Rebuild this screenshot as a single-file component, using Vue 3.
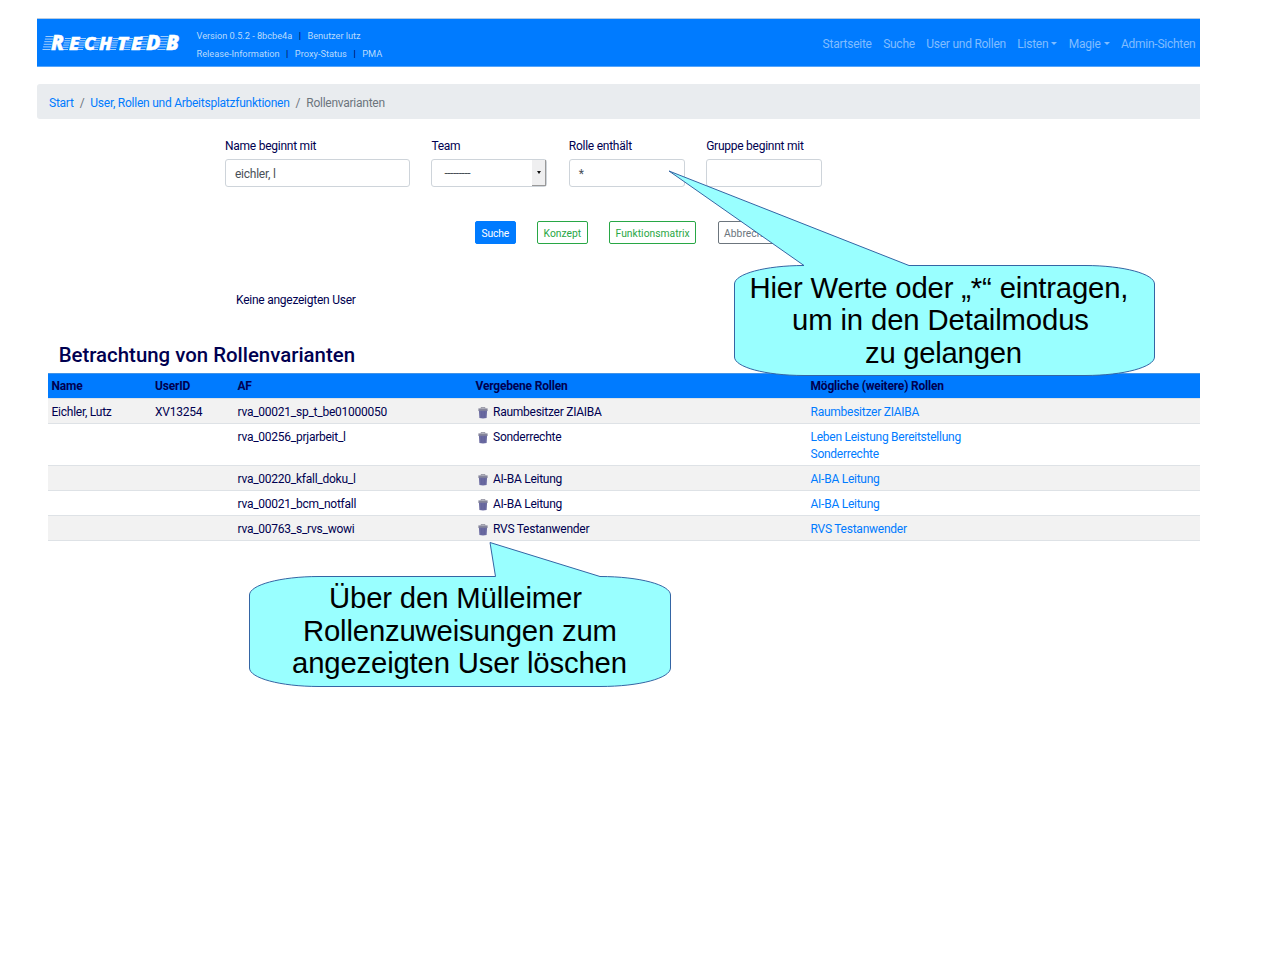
<script setup>
const nav = [
  { label: 'Startseite' },
  { label: 'Suche' },
  { label: 'User und Rollen' },
  { label: 'Listen', menu: true },
  { label: 'Magie', menu: true },
  { label: 'Admin-Sichten' },
]
const rows = [
  { name: 'Eichler, Lutz', id: 'XV13254', af: 'rva_00021_sp_t_be01000050', role: 'Raumbesitzer ZIAIBA', more: ['Raumbesitzer ZIAIBA'] },
  { af: 'rva_00256_prjarbeit_l', role: 'Sonderrechte', more: ['Leben Leistung Bereitstellung', 'Sonderrechte'] },
  { af: 'rva_00220_kfall_doku_l', role: 'AI-BA Leitung', more: ['AI-BA Leitung'] },
  { af: 'rva_00021_bcm_notfall', role: 'AI-BA Leitung', more: ['AI-BA Leitung'] },
  { af: 'rva_00763_s_rvs_wowi', role: 'RVS Testanwender', more: ['RVS Testanwender'] },
]
const glyphs = [
  { c: 'R', x: 14, w: 13, big: true },
  { c: 'E', x: 32, w: 10.5 },
  { c: 'C', x: 47, w: 11.5 },
  { c: 'H', x: 62, w: 13 },
  { c: 'T', x: 80, w: 11 },
  { c: 'E', x: 94, w: 11 },
  { c: 'D', x: 109, w: 14.5, big: true },
  { c: 'B', x: 129, w: 13, big: true },
]
const streaks = [0, 1, 2, 3, 4, 5]
</script>

<template>
  <div class="page">
    <header class="bar">
      <svg class="logo" width="146" height="32" viewBox="0 -4 146 32">
        <g v-for="(g, i) in glyphs" :key="i">
          <path
            v-for="s in streaks"
            :key="s"
            :d="`M${g.x - (g.big ? 5.5 : 4) - s * 0.6} ${(g.big ? 5.5 : 7.5) + s * (g.big ? 2.6 : 2.2)}h${g.big ? 8 : 6}`"
            class="streak"
          />
          <text :x="g.x" y="19" :font-size="g.big ? 20.5 : 17.5" :textLength="g.w" lengthAdjust="spacingAndGlyphs" class="glyph">{{ g.c }}</text>
        </g>
      </svg>
      <div class="meta">
        <div><span>Version 0.5.2 - 8bcbe4a</span><i>|</i><span>Benutzer lutz</span></div>
        <div><span>Release-Information</span><i>|</i><span>Proxy-Status</span><i>|</i><span>PMA</span></div>
      </div>
      <nav>
        <a v-for="n in nav" :key="n.label">{{ n.label }}<b v-if="n.menu" class="caret"></b></a>
      </nav>
    </header>

    <div class="crumbs"><a>Start</a><span>/</span><a>User, Rollen und Arbeitsplatzfunktionen</a><span>/</span><em>Rollenvarianten</em></div>

    <form class="filters" @submit.prevent>
      <div><label>Name beginnt mit</label><div class="field">eichler, l</div></div>
      <div><label>Team</label><div class="field select"><span>---------</span><div class="drop"><b class="caret dark"></b></div></div></div>
      <div><label>Rolle enthält</label><div class="field">*</div></div>
      <div><label>Gruppe beginnt mit</label><div class="field"></div></div>
    </form>

    <div class="buttons">
      <button class="primary">Suche</button>
      <button class="green">Konzept</button>
      <button class="green">Funktionsmatrix</button>
      <button class="grey">Abbrechen</button>
    </div>

    <p class="none">Keine angezeigten User</p>
    <h1>Betrachtung von Rollenvarianten</h1>

    <div class="table">
      <div class="row head"><div>Name</div><div>UserID</div><div>AF</div><div>Vergebene Rollen</div><div>Mögliche (weitere) Rollen</div></div>
      <div v-for="r in rows" :key="r.af" class="row">
        <div>{{ r.name }}</div>
        <div>{{ r.id }}</div>
        <div>{{ r.af }}</div>
        <div class="role">
          <svg width="10" height="12" viewBox="0 0 10 12">
            <path d="M3 1.4V.6h4v.8" fill="none" stroke="#8c8c9c" stroke-width=".9" />
            <path d="M.4 1.4h9.200v2.600H.4z" fill="#85859a" />
            <path d="M.9 3.700h8.200l-.5 7.300q-3.600.9-7.200 0z" fill="#6c6ca2" />
            <path d="M3.400 4.500v6M5 4.500v6M6.600 4.500v6" stroke="#5d5d96" stroke-width=".5" />
          </svg>
          {{ r.role }}
        </div>
        <div><a v-for="m in r.more" :key="m">{{ m }}</a></div>
      </div>
    </div>

    <svg class="callouts" width="1280" height="960" viewBox="0 0 1280 960">
      <path class="bubble" d="M804 265.5L669 171L909 265.5H1085C1124 265.5 1154.500 274 1154.500 284V357C1154.500 367 1124 375.500 1085 375.500H804C765 375.500 734.500 367 734.500 357V284C734.500 274 765 265.500 804 265.500Z" />
      <text x="749.500" y="298" textLength="379">Hier Werte oder „*“ eintragen,</text>
      <text x="792" y="330" textLength="297">um in den Detailmodus</text>
      <text x="865" y="363" textLength="157">zu gelangen</text>
      <path class="bubble" d="M495.500 576.500L490 542.500L600 576.500C640 576.500 670.500 585 670.500 595V668C670.500 678 640 686.500 600 686.500H319C280 686.500 249.500 678 249.500 668V595C249.500 585 280 576.500 319 576.500Z" />
      <text x="329" y="608" textLength="253">Über den Mülleimer</text>
      <text x="303" y="641" textLength="314">Rollenzuweisungen zum</text>
      <text x="292" y="673" textLength="335">angezeigten User löschen</text>
    </svg>
  </div>
</template>

<style>
body { margin: 0; background: #fff; }
</style>

<style scoped>
.page {
  position: relative;
  box-sizing: border-box;
  width: 1280px;
  height: 960px;
  padding: 18px 80px 0 37px;
  overflow: hidden;
  font: 12px/17.3px Roboto, sans-serif;
  letter-spacing: -.25px;
  color: #000050;
}
a { color: #007bff; }
.bar {
  display: flex;
  align-items: center;
  box-sizing: border-box;
  height: 49px;
  border-top: 1px solid #b8cbe0;
  border-bottom: 1px solid #55a5fb;
  background: #007bff;
}
.logo { width: 146px; height: 32px; margin: 0 13.500px 0 0; overflow: visible; }
.streak { fill: none; stroke: #fff; stroke-width: .9; opacity: .7; }
.glyph { font-family: "Open Sans", sans-serif; font-weight: 800; font-style: italic; letter-spacing: 0; fill: #fff; stroke: #fff; stroke-width: .4; }
.meta { font-size: 9.25px; letter-spacing: 0; line-height: 18px; color: #b8dafd; white-space: nowrap; padding-top: 4px; }
.meta i { font-style: normal; color: #000050; margin: 0 6.500px; }
.meta div:first-child { letter-spacing: -.04px; }
nav { display: flex; gap: 11.400px; margin-left: auto; padding: 4px 4.500px 0 0; }
nav a { color: #80bdff; white-space: nowrap; }
.caret {
  display: inline-block;
  margin-left: 3px;
  vertical-align: 3px;
  border: 3px solid transparent;
  border-top-color: #80bdff;
  border-bottom: 0;
}
.crumbs {
  display: flex;
  box-sizing: border-box;
  height: 35px;
  margin-top: 17px;
  padding: 10.500px 12px 0;
  background: #e9ecef;
  border-radius: 3px 0 0 3px;
}
.crumbs span { color: #6c757d; padding: 0 6px; }
.crumbs em { color: #6c757d; font-style: normal; }
.filters {
  display: grid;
  grid-template-columns: 185px 116px 116px 116px;
  column-gap: 21.400px;
  margin: 19px 0 0 188px;
}
.filters label { display: block; height: 21px; }
.field {
  display: flex;
  align-items: center;
  box-sizing: border-box;
  height: 28px;
  padding: 3px 9px 0;
  border: 1px solid #ced4da;
  border-radius: 3px;
  color: #495057;
}
.select { padding: 0 0 0 12px; justify-content: space-between; letter-spacing: -.45px; }
.select span { padding-top: 2px; }
.drop {
  display: flex;
  align-items: center;
  justify-content: center;
  box-sizing: border-box;
  width: 14px;
  height: 26px;
  background: #efeff0;
  border: solid #999;
  border-width: 0 1.500px 1.500px 0;
}
.caret.dark { margin: 0; border-width: 3px 2px 0; border-top-color: #111; }
.buttons { display: flex; gap: 21.500px; margin: 34px 0 0 438px; }
button {
  box-sizing: border-box;
  height: 23px;
  padding: 1px 5.500px 0;
  font: 10.300px/15px Roboto, sans-serif;
  border: 1px solid;
  border-radius: 2px;
  background: #fff;
}
.primary { color: #fff; background: #007bff; border-color: #007bff; letter-spacing: -.15px; }
.green { color: #28a745; }
.grey { color: #6c757d; }
.none { margin: 48px 0 0 199px; }
h1 { margin: 34px 0 0 21.700px; font-size: 20.400px; line-height: 25px; font-weight: 500; height: 30px; letter-spacing: 0; }
.table { margin-left: 11px; }
.row {
  display: grid;
  grid-template-columns: 103.500px 82.500px 238px 335px 1fr;
  box-sizing: border-box;
  padding: 4.700px 0 1.900px 3.500px;
  border-top: 1px solid #dee2e6;
}
.row:nth-child(even) { background: #f2f2f2; }
.row:last-child { border-bottom: 1px solid #dee2e6; }
.row.head { background: #007bff; font-weight: 700; letter-spacing: -.19px; border-color: #4294e8; padding: 4px 0 2.600px 3.500px; }
.row a { display: block; }
.role { display: flex; align-items: flex-start; }
.role svg { width: 10px; height: 12px; margin: 3px 5px 0 2.500px; }
.callouts { position: absolute; left: 0; top: 0; }
.bubble { fill: #9ff; stroke: #3465a4; stroke-width: 1; }
.callouts text { font: 29.300px "Liberation Sans", Arial, sans-serif; letter-spacing: 0; fill: #000; }
</style>
